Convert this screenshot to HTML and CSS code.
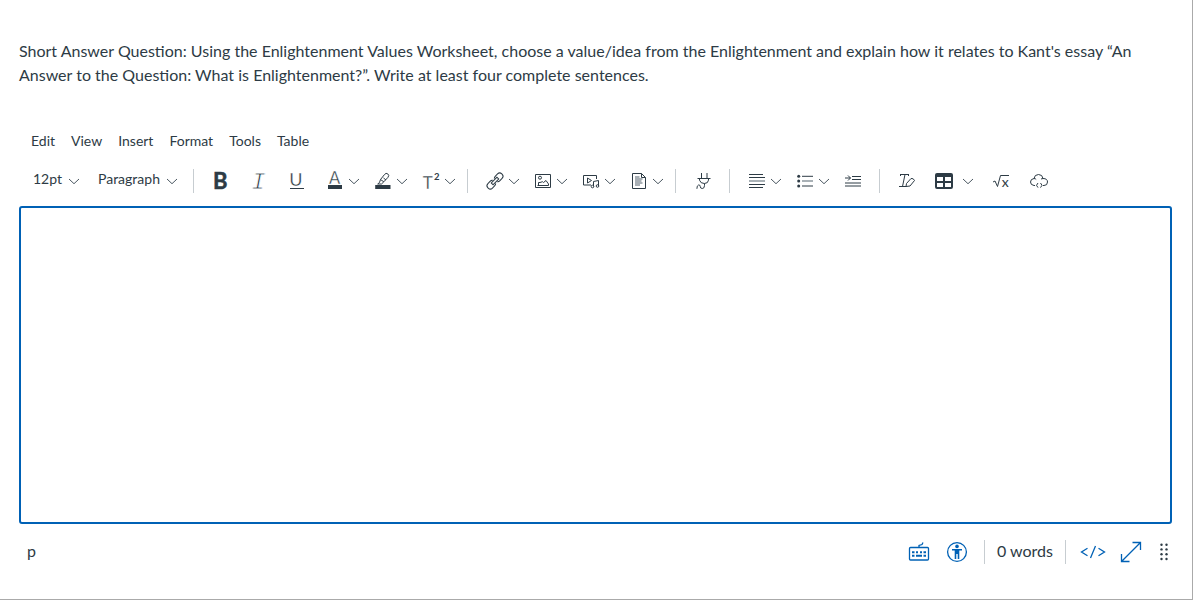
FILE: index.html
```html
<!DOCTYPE html>
<html lang="en">
<head>
<meta charset="utf-8">
<title>Short Answer Question</title>
<link rel="stylesheet" href="styles.css">
</head>
<body>
<svg class="defs" width="0" height="0"><defs><symbol id="chev" viewBox="0 0 12 20"><path d="M1 8l5 4.700 5-4.700"/></symbol></defs></svg>
<main class="question">
<p class="prompt">Short Answer Question: Using the Enlightenment Values Worksheet, choose a value/idea from the Enlightenment and explain how it relates to Kant's essay “An Answer to the Question: What is Enlightenment?”. Write at least four complete sentences.</p>
<nav class="menubar"><span>Edit</span><span>View</span><span>Insert</span><span>Format</span><span>Tools</span><span>Table</span></nav>
<div class="toolbar">
  <div class="group selects">
    <span class="select size">12pt<svg class="chev"><use href="#chev"/></svg></span>
    <span class="select">Paragraph<svg class="chev"><use href="#chev"/></svg></span>
  </div>
  <div class="group styles">
    <span class="btn"><svg class="icon" viewBox="0 0 20 20"><text class="bold" x="3" y="18">B</text></svg></span>
    <span class="btn"><svg class="icon" viewBox="0 0 20 20"><text class="italic" x="3.200" y="18">I</text></svg></span>
    <span class="btn"><svg class="icon" viewBox="0 0 20 20"><text class="under" x="3.300" y="15">U</text><path d="M4 17.500h14"/></svg></span>
    <span class="split first"><svg class="icon" viewBox="0 0 20 20"><text class="color" x="4" y="13">A</text><path class="fill" d="M3 14h14v4H3z"/></svg><svg class="chev"><use href="#chev"/></svg></span>
    <span class="split"><svg class="icon" viewBox="0 0 20 20"><path d="M7.500 8.500l4-5q1.500-2 3.300-.6 1.800 1.500.2 3.400l-4.200 4.500zM7.500 8.500l-1 3-1.800 1.500h3.800l2.300-2.200M10.500 7l2.500 2"/><path class="fill" d="M2.200 14h15.300v4H2.200z"/></svg><svg class="chev"><use href="#chev"/></svg></span>
    <span class="split"><svg class="icon" viewBox="0 0 20 20"><text class="sup-base" x="1.800" y="18">T</text><text class="sup" x="13" y="9">2</text></svg><svg class="chev"><use href="#chev"/></svg></span>
  </div>
  <div class="group insert">
    <span class="split"><svg class="icon" viewBox="0 0 20 20"><g transform="rotate(-45 10 10)"><rect x="0.200" y="6.800" width="9" height="6.400" rx="3"/><rect x="10.800" y="6.800" width="9" height="6.400" rx="3"/><path class="gap" d="M6.500 10h7"/><path d="M6 8.700h8v2.600H6z"/></g></svg><svg class="chev"><use href="#chev"/></svg></span>
    <span class="split"><svg class="icon" viewBox="0 0 20 20"><path d="M2.500 3.500h15v13h-15zM4.500 14.500h11v-1.500l-2.500-3.500-2.500 2-1-.8-2.500.8H5.500v3"/><circle cx="7" cy="6.700" r="1.500"/></svg><svg class="chev"><use href="#chev"/></svg></span>
    <span class="split"><svg class="icon" viewBox="0 0 20 20"><path d="M10 14H2.500V4.500h13V8M6.500 7v5l4-2.500zM12.500 15.500v-5l5-1v5.500"/><circle cx="11.500" cy="15.500" r="1.300"/><circle cx="16.500" cy="15" r="1.300"/></svg><svg class="chev"><use href="#chev"/></svg></span>
    <span class="split"><svg class="icon" viewBox="0 0 20 20"><path d="M3.500 2.500h9l4 4v11h-13zM12.500 2.500v4h4"/><path class="soft" d="M6 6h4.500M6 8h7.500M6 10h6.500M6 12h7.500M6 14h5"/></svg><svg class="chev"><use href="#chev"/></svg></span>
  </div>
  <div class="group plug">
    <span class="btn"><svg class="icon" viewBox="0 0 20 20"><path d="M8.500 2v5M14 2v5M4.500 7.500h13M6.500 7.500v1.700q1 3.300 4.800 3.300t4.200-3.300V7.500M11.500 12.500v2q0 3-2.200 3t-2.100-2.200q-.1-1.600-1.700-1.300-1.600.4-1.600 3.800"/></svg></span>
  </div>
  <div class="group para">
    <span class="split"><svg class="icon" viewBox="0 0 20 20"><path d="M2 3.500h14M2 6.500h16M2 13.500h16M2 16.500h14"/><path class="soft" d="M2 10h16"/></svg><svg class="chev"><use href="#chev"/></svg></span>
    <span class="split"><svg class="icon" viewBox="0 0 20 20"><path d="M7 5.300h11M7 15h11"/><path class="soft" d="M7 10h11"/><g class="fill"><circle cx="3.700" cy="5.200" r="1.500"/><circle cx="3.700" cy="10" r="1.500"/><circle cx="3.700" cy="15" r="1.500"/></g></svg><svg class="chev"><use href="#chev"/></svg></span>
    <span class="btn indent"><svg class="icon" viewBox="0 0 20 20"><path d="M9 5.500h9M9 8.500h9M2 12h16M2 15h16M2 7h5.500M5 4.500L7.500 7 5 9.500"/></svg></span>
  </div>
  <div class="group misc">
    <span class="btn"><svg class="icon" viewBox="0 0 20 20"><path d="M3 3.500h9M3.500 3v2M11.500 3v2M8 3.500L5.500 15.500M2 15.500h7M9 15.500l.5-3 4.500-5q2.500-.5 3.500 2l-4.500 5.500z"/></svg></span>
    <span class="split table"><svg class="icon" viewBox="0 0 20 20"><path class="fill" fill-rule="evenodd" d="M3 2h14q2 0 2 2v12q0 2-2 2H3q-2 0-2-2V4q0-2 2-2zM3 6v4h6V6zM11 6v4h6V6zM3 12v4h6v-4zM11 12v4h6v-4z"/></svg><svg class="chev"><use href="#chev"/></svg></span>
    <span class="btn root"><svg class="icon" viewBox="0 0 20 20"><path d="M2 11l2-1 2.500 5.500L9.500 4.500H18"/><text class="radicand" x="10.700" y="15.500">x</text></svg></span>
    <span class="btn"><svg class="icon" viewBox="0 0 20 20"><path d="M6 14.500H5q-3.500-.5-3.500-3.500T5 7.500Q5.500 3.500 9.500 3.500t4.500 4q4.500 0 4.500 3.500t-3.500 3.500h-1M5 7.500q1.500 0 2.200 1M14 7.500l-2 .5M9 12l-1.500 2.300L9 16.600M11.500 12l1.500 2.300-1.500 2.300"/></svg></span>
  </div>
</div>
<div class="editor"></div>
<footer class="status">
  <span class="path">p</span>
  <div class="tools">
    <svg class="tool" viewBox="0 0 22 22"><rect x="1.500" y="6.500" width="19" height="12.500" rx="1"/><path d="M11 6V4.500l3-1 1-2"/><path class="keys" d="M4 11.200h2.500M8 11.200h2M12 11.200h2M15.500 11.200h2.500M4 14.800h2.500M8 14.800h6M15.500 14.800h2.500"/></svg>
    <svg class="tool access" viewBox="0 0 22 22"><circle cx="11" cy="11" r="9.400"/><circle class="fill" cx="11" cy="5.400" r="1.800"/><path class="fill" d="M6 8h10v1.500h-2.700v8.500h-1.600v-5h-1.400v5H8.700V9.500H6z"/></svg>
    <span class="words">0 words</span>
    <svg class="code" viewBox="0 0 26 22"><path d="M7.500 7.300L1.500 11l6 3.700M18.500 7.300l6 3.700-6 3.700M15.500 5l-5 12"/></svg>
    <svg class="tool expand" viewBox="0 0 22 22"><path d="M2 20L20 2M12.500 1.500h8v7.500M1.500 13v7.500h8"/></svg>
    <svg class="grip" viewBox="0 0 10 22"><g class="fill"><circle cx="2.500" cy="3.700" r="1.200"/><circle cx="7.500" cy="3.700" r="1.200"/><circle cx="2.500" cy="8.400" r="1.200"/><circle cx="7.500" cy="8.400" r="1.200"/><circle cx="2.500" cy="13.300" r="1.200"/><circle cx="7.500" cy="13.300" r="1.200"/><circle cx="2.500" cy="18" r="1.200"/><circle cx="7.500" cy="18" r="1.200"/></g></svg>
  </div>
</footer>
</main>
</body>
</html>
```
FILE: styles.css
```css
* { box-sizing: border-box; }
body { margin: 0; background: #fff; color: #2d3b45; font: 16px/24px Lato, "Liberation Sans", sans-serif; }
.defs { display: block; }
.question { height: 600px; padding: 39px 20px 0 19px; border-right: 1px solid #aaa; border-bottom: 1px solid #aaa; overflow: hidden; }
.prompt { margin: 0; word-spacing: 0.04px; }
.menubar { display: flex; gap: 16px; margin-top: 42px; padding-left: 12px; font-size: 14px; height: 24px; }
.toolbar { display: flex; height: 24px; margin-top: 16px; }
.group { display: flex; align-items: center; height: 24px; border-left: 1px solid #c7cdd1; }
.selects { width: 174px; border-left: 0; padding-left: 14px; font-size: 14px; }
.select { display: flex; align-items: center; gap: 6px; line-height: 20px; height: 24px; padding-bottom: 4px; }
.select .chev { margin-top: 3px; }
.size { width: 65px; }
.styles { width: 274px; padding-left: 7px; }
.insert { width: 208px; padding-left: 13px; }
.plug { width: 54px; padding-left: 8px; }
.para { width: 150px; padding-left: 13px; }
.misc { padding-left: 8px; }
.btn { display: flex; justify-content: center; width: 38px; flex: none; }
.split { display: flex; gap: 3px; width: 48px; padding-left: 4px; flex: none; }
.first { margin-left: 6px; }
.indent { margin-left: -5px; }
.table { margin-left: 4px; gap: 8px; }
.root { margin-left: 4px; }
svg { fill: none; stroke: #2d3b45; stroke-width: 1; flex: none; overflow: visible; }
.icon { width: 20px; height: 20px; }
.chev { width: 12px; height: 20px; stroke: #4b5862; }
.fill, text { fill: #2d3b45; stroke: none; }
.soft { stroke: #8d979e; stroke-width: 1.5; }
.gap { stroke: #fff; stroke-width: 4; }
text { line-height: 1; }
.bold { font: 700 22px Lato, sans-serif; stroke: #2d3b45; stroke-width: 0.5; }
.italic { font: italic 24px "Liberation Mono", monospace; stroke: #fff; stroke-width: 0.8; }
.under { font: 400 18px Lato, sans-serif; stroke: #fff; stroke-width: 0.3; }
.color { font: 400 16.5px Lato, sans-serif; stroke: #fff; stroke-width: 0.3; }
.sup-base { font: 400 17px Lato, sans-serif; stroke: #fff; stroke-width: 0.3; }
.sup { font: 700 9.5px Lato, sans-serif; }
.radicand { font: 400 14px Lato, sans-serif; }
.editor { height: 318px; margin-top: 13px; border: 2px solid #0061b5; border-radius: 3px; }
.status { display: flex; justify-content: space-between; height: 24px; margin-top: 16px; padding: 0 3px 0 8px; }
.path { line-height: 22px; }
.tools { display: flex; align-items: center; }
.tools svg { stroke: #0061b5; stroke-width: 1.3; height: 22px; }
.tools .tool { width: 22px; }
.tools .fill { fill: #0061b5; stroke: none; }
.tools .keys { stroke-width: 2; }
.access { margin-left: 16px; }
.words { height: 24px; line-height: 22px; margin-left: 16px; padding: 0 12px; border: solid #c7cdd1; border-width: 0 1px; white-space: nowrap; }
.code { width: 26px; margin-left: 14px; }
.expand { margin-left: 14px; }
.grip { width: 10px; margin-left: 17px; }
.tools .grip .fill { fill: #2d3b45; }
```
